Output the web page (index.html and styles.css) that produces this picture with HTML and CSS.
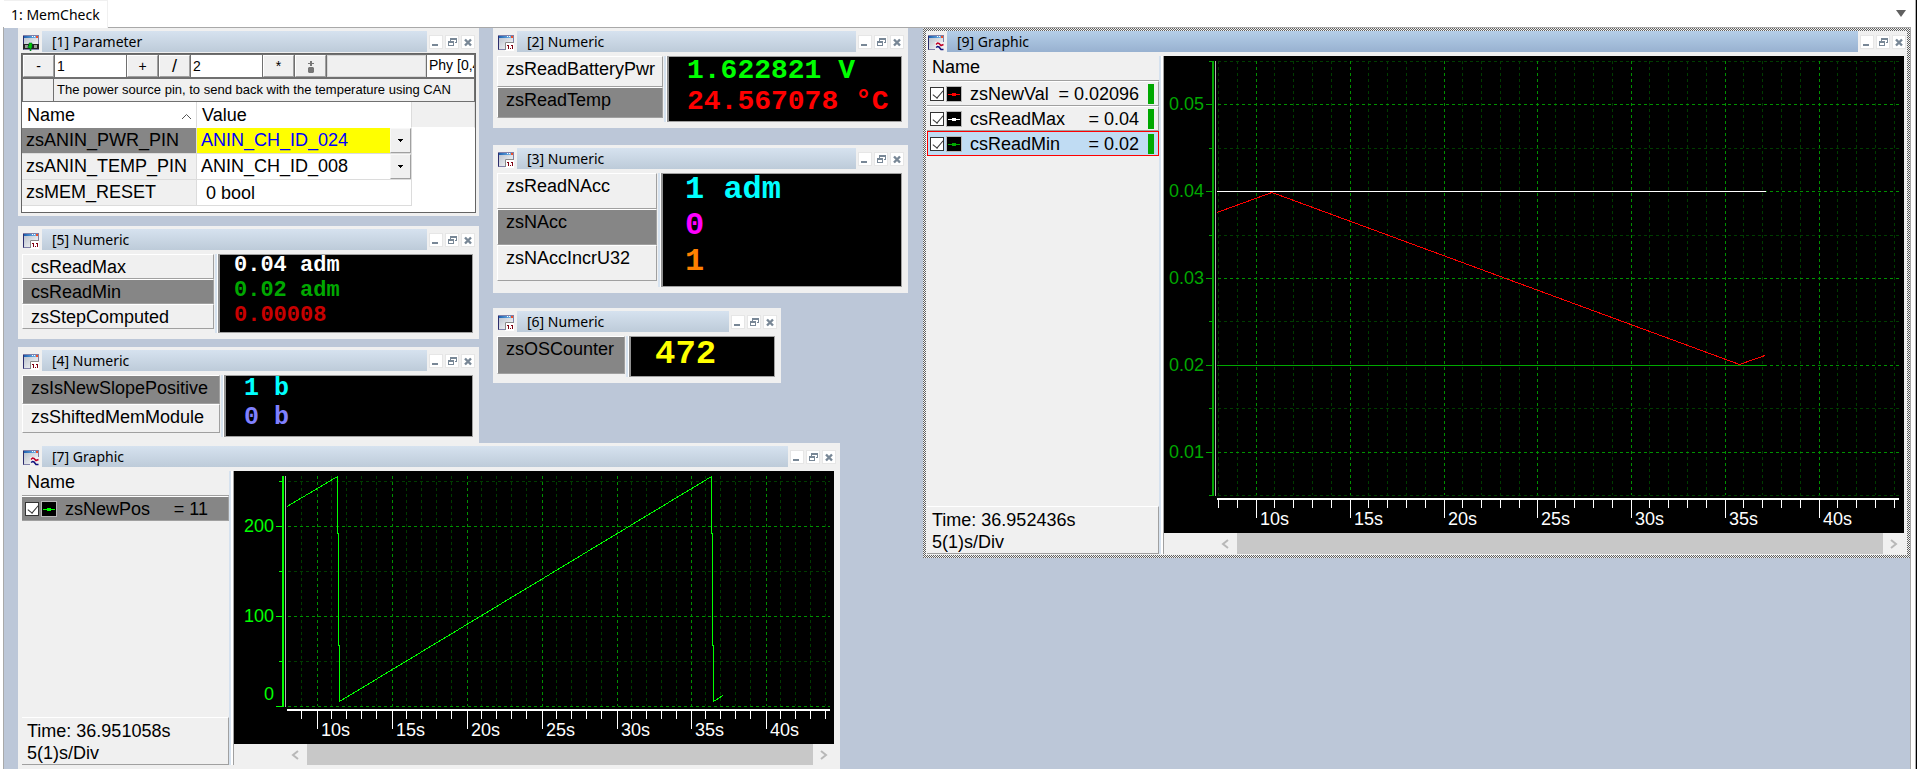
FILE: index.html
```html
<!DOCTYPE html>
<html lang="en">
<head>
<meta charset="utf-8">
<title>MemCheck</title>
<link rel="stylesheet" href="styles.css">
</head>
<body>
<svg class="defs" aria-hidden="true">
  <defs>
    <linearGradient id="pane" x1="0" y1="0" x2="1" y2="1"><stop offset="0" stop-color="#b4bcc8"/><stop offset="1" stop-color="#fff"/></linearGradient>
    <linearGradient id="cap" x1="0" y1="0" x2="1" y2="0"><stop offset="0" stop-color="#1d5fae"/><stop offset="1" stop-color="#7fc4f5"/></linearGradient>
  </defs>
  <symbol id="i-frame" viewBox="0 0 16 16">
    <rect x=".5" y=".5" width="15" height="14" fill="url(#pane)" stroke="#8080a8"/>
    <path d="M.5 1v13.5" stroke="#2c2c6c"/>
    <rect x="1" y="1" width="14" height="2" fill="url(#cap)"/>
    <path d="M9 1h1v1H9zM11 1h1v1h-1z" fill="#fff"/><path d="M13 1h2v2h-2z" fill="#f0512b"/>
  </symbol>
  <symbol id="i-param" viewBox="0 0 16 16">
    <use href="#i-frame" width="16" height="16"/>
    <path d="M0 9h16v5H0z" fill="#222"/><path d="M2 10h3v3H2zM11 10h3v3h-3z" fill="#999"/>
    <path d="M6 8h3v5H8v3H7v-3H5v-2h1z" fill="#0c0" stroke="#063" stroke-width=".6"/>
  </symbol>
  <symbol id="i-num" viewBox="0 0 16 16">
    <use href="#i-frame" width="16" height="16"/>
    <path d="M7 16V7h9v9z" fill="#fff"/><path d="M7.500 15V7.500H16" fill="none" stroke="#888"/>
    <path d="M9 10h2v4H10v-3H9zM13 10h2v4h-1v-3h-1zM12 13h1v1h-1z" fill="#800010"/>
  </symbol>
  <symbol id="i-graph" viewBox="0 0 16 16">
    <use href="#i-frame" width="16" height="16"/>
    <path d="M7 7h9v9H7z" fill="#f0f0f0"/>
    <path d="M8 9.500L9.500 8L11 8.500L13 10.500L15.500 9.500" fill="none" stroke="#c00028" stroke-width="1.500"/>
    <path d="M8 12.500L9.500 11.500L11 12L13 14.500L15.500 14.500" fill="none" stroke="#10107c" stroke-width="1.500"/>
  </symbol>
  <symbol id="i-min" viewBox="0 0 14 14"><path d="M3 9h6v2H3z" fill="#788796"/></symbol>
  <symbol id="i-restore" viewBox="0 0 14 14"><path d="M5 3h7v5h-2V7h1V5H6v1H5z" fill="#788796"/><path d="M3 6h6v5H3zM4 8v2h4V8z" fill="#788796" fill-rule="evenodd"/></symbol>
  <symbol id="i-close" viewBox="0 0 14 14"><path d="M4 4.500l6 6M10 4.500l-6 6" stroke="#788796" stroke-width="2.400"/></symbol>
  <symbol id="i-line" viewBox="0 0 14 14"><path d="M1 7.500h12" stroke="currentColor"/><path d="M5 6h4v3H5z" fill="currentColor"/></symbol>
</svg>

<header class="tabs">
  <button class="tab" type="button">1: MemCheck</button>
  <button class="tab-menu" type="button" aria-label="Tab list"></button>
</header>

<main class="desk">

  <section class="win w1">
    <header class="bar"><svg class="ico"><use href="#i-param"/></svg><h2>[1] Parameter</h2></header>
    <div class="param">
      <div class="tools">
        <button type="button">-</button><input class="step" aria-label="Step" value="1"><button type="button">+</button><button type="button" class="big">/</button><input class="step" aria-label="Factor" value="2"><button type="button">*</button><button type="button" aria-label="Reset"><svg class="knob" viewBox="0 0 8 14"><path d="M3 1h2v2h2v1H5v2H3V4H1V3h2zM2 7h4l1 1v4l-1 1H2l-1-1V8z" fill="#777"/></svg></button><span class="blank"></span><span class="phy">Phy [0,4]</span>
      </div>
      <div class="tools"><span class="pad"></span><span class="hint">The power source pin, to send back with the temperature using CAN</span></div>
      <table>
        <thead><tr><th>Name<svg class="sort" viewBox="0 0 9 5"><path d="M0 5l4.500-4.500L9 5" fill="none" stroke="#555"/></svg></th><th>Value</th><th class="rest"></th></tr></thead>
        <tbody>
          <tr class="sel"><td>zsANIN_PWR_PIN</td><td><div class="pick"><select aria-label="zsANIN_PWR_PIN"><option>ANIN_CH_ID_024</option></select><i></i></div></td><td></td></tr>
          <tr><td>zsANIN_TEMP_PIN</td><td><div class="pick"><select aria-label="zsANIN_TEMP_PIN"><option>ANIN_CH_ID_008</option></select><i></i></div></td><td></td></tr>
          <tr><td>zsMEM_RESET</td><td class="plain">0 bool</td><td></td></tr>
        </tbody>
      </table>
    </div>
  </section>

  <section class="win w5">
    <header class="bar"><svg class="ico"><use href="#i-num"/></svg><h2>[5] Numeric</h2></header>
    <div class="num">
      <ul class="names"><li>csReadMax</li><li class="on">csReadMin</li><li>zsStepComputed</li></ul>
      <ul class="vals"><li class="white">0.04 adm</li><li class="green">0.02 adm</li><li class="brick">0.00008</li></ul>
    </div>
  </section>

  <section class="win w4">
    <header class="bar"><svg class="ico"><use href="#i-num"/></svg><h2>[4] Numeric</h2></header>
    <div class="num">
      <ul class="names"><li class="on">zsIsNewSlopePositive</li><li>zsShiftedMemModule</li></ul>
      <ul class="vals"><li class="cyan">1 b</li><li class="violet">0 b</li></ul>
    </div>
  </section>

  <section class="win w2">
    <header class="bar"><svg class="ico"><use href="#i-num"/></svg><h2>[2] Numeric</h2></header>
    <div class="num">
      <ul class="names"><li>zsReadBatteryPwr</li><li class="on">zsReadTemp</li></ul>
      <ul class="vals"><li class="lime">1.622821 V</li><li class="red">24.567078 °C</li></ul>
    </div>
  </section>

  <section class="win w3">
    <header class="bar"><svg class="ico"><use href="#i-num"/></svg><h2>[3] Numeric</h2></header>
    <div class="num">
      <ul class="names"><li>zsReadNAcc</li><li class="on">zsNAcc</li><li>zsNAccIncrU32</li></ul>
      <ul class="vals"><li class="cyan">1 adm</li><li class="magenta">0</li><li class="orange">1</li></ul>
    </div>
  </section>

  <section class="win w6">
    <header class="bar"><svg class="ico"><use href="#i-num"/></svg><h2>[6] Numeric</h2></header>
    <div class="num">
      <ul class="names"><li class="on">zsOSCounter</li></ul>
      <ul class="vals"><li class="yellow">472</li></ul>
    </div>
  </section>

  <section class="win w7">
    <header class="bar"><svg class="ico"><use href="#i-graph"/></svg><h2>[7] Graphic</h2></header>
    <div class="graphic">
      <div class="side">
        <h3>Name</h3>
        <ul class="signals">
          <li class="on"><label><input type="checkbox" checked><svg class="sw lime" viewBox="0 0 14 14"><use href="#i-line"/></svg>zsNewPos</label><output>= 11</output></li>
        </ul>
        <p class="time">Time: 36.951058s<br>5(1)s/Div</p>
      </div>
      <div class="plot">
        <div class="screen" id="chart7"></div>
        <div class="scroll"><button type="button" aria-label="Left"><svg viewBox="0 0 8 10"><path d="M7 1L2 5l5 4"/></svg></button><span class="thumb"></span><button type="button" aria-label="Right"><svg viewBox="0 0 8 10"><path d="M1 1l5 4-5 4"/></svg></button></div>
      </div>
    </div>
  </section>

  <section class="win active w9">
    <header class="bar"><svg class="ico"><use href="#i-graph"/></svg><h2>[9] Graphic</h2></header>
    <div class="graphic">
      <div class="side">
        <h3>Name</h3>
        <ul class="signals">
          <li><label><input type="checkbox" checked><svg class="sw red" viewBox="0 0 14 14"><use href="#i-line"/></svg>zsNewVal</label><output>= 0.02096</output><b></b></li>
          <li><label><input type="checkbox" checked><svg class="sw white" viewBox="0 0 14 14"><use href="#i-line"/></svg>csReadMax</label><output>= 0.04</output><b></b></li>
          <li class="current"><label><input type="checkbox" checked><svg class="sw green" viewBox="0 0 14 14"><use href="#i-line"/></svg>csReadMin</label><output>= 0.02</output><b></b></li>
        </ul>
        <p class="time">Time: 36.952436s<br>5(1)s/Div</p>
      </div>
      <div class="plot">
        <div class="screen" id="chart9"></div>
        <div class="scroll"><button type="button" aria-label="Left"><svg viewBox="0 0 8 10"><path d="M7 1L2 5l5 4"/></svg></button><span class="thumb"></span><button type="button" aria-label="Right"><svg viewBox="0 0 8 10"><path d="M1 1l5 4-5 4"/></svg></button></div>
      </div>
    </div>
  </section>
</main>

<script src="app.js"></script>
</body>
</html>
```
FILE: styles.css
```css
* { box-sizing: border-box; }
html, body { height: 100%; }
body {
  margin: 0;
  display: flex;
  flex-direction: column;
  overflow: hidden;
  background: #fff;
  border-right: 1px solid #000;
  font: 18px/24px "Liberation Sans", Arial, sans-serif;
  color: #000;
}
ul, h2, h3, p { margin: 0; padding: 0; list-style: none; font-size: 18px; font-weight: normal; }
button, input, select { font: inherit; color: inherit; margin: 0; padding: 0; border: 0; border-radius: 0; }
.defs { position: absolute; width: 0; height: 0; }

.tabs {
  display: flex;
  justify-content: space-between;
  align-items: stretch;
  height: 28px;
  padding: 0 10px 0 4px;
  background: linear-gradient(#a9a9a9, #a9a9a9) 3px 27px / calc(100% - 8px) 1px no-repeat #fff;
}
.tab {
  padding: 0 7px;
  background: #fff;
  border: solid #f0f0f0;
  border-width: 1px 1px 0 0;
  font: 14px/26px "Noto Sans", "Open Sans", sans-serif;
}
.tab-menu {
  width: 10px;
  height: 7px;
  margin-top: 10px;
  background: #606060;
  clip-path: polygon(0 0, 100% 0, 50% 100%);
}

.desk {
  position: relative;
  flex: 1;
  overflow: hidden;
  margin-left: 3px;
  margin-right: 5px;
  border: solid #a9a9a9;
  border-width: 0 1px;
  background: #bcc7d8;
}
body::after {
  content: "";
  position: absolute;
  top: 0;
  right: 1px;
  width: 1px;
  height: 100%;
  background: #b0b0b0;
}

.win {
  position: absolute;
  background: #f0f0f0;
  display: flex;
  flex-direction: column;
}
.w1 { left: 14px; top: 0; width: 461px; height: 188px; }
.w5 { left: 14px; top: 198px; width: 461px; }
.w4 { left: 14px; top: 319px; width: 461px; height: 96px; }
.w2 { left: 489px; top: 0; width: 415px; }
.w3 { left: 489px; top: 117px; width: 415px; }
.w6 { left: 489px; top: 280px; width: 288px; }
.w7 { left: 14px; top: 415px; width: 822px; height: 328px; }
.w9 { left: 919px; right: 0; top: 0; height: 530px; }
.active::after {
  content: "";
  position: absolute;
  inset: 0;
  border: 3px solid transparent;
  background: conic-gradient(#606060 25%, #f4f4f4 0 50%, #606060 0 75%, #f4f4f4 0) 0 0 / 2px 2px border-box;
  mask: linear-gradient(#000 0 0) padding-box, linear-gradient(#000 0 0);
  mask-composite: exclude;
  pointer-events: none;
}

.bar { display: flex; align-items: center; height: 28px; padding: 3px 4px 4px 5px; }
.ico { width: 16px; height: 16px; margin: 2px 3px 0 0; }
.bar h2 {
  flex: 1;
  height: 21px;
  padding-left: 10px;
  margin-right: 2px;
  background: linear-gradient(#d6e2ef, #bdcbd9);
  font: 14px/21px "Noto Sans", "Open Sans", sans-serif;
}
.active .bar h2 { background: linear-gradient(#b4cee8, #98b1d0); }
.ctl { display: flex; gap: 2px; padding-top: 1px; }
.ctl button { display: block; width: 14px; height: 14px; background: #fff; outline: 1px solid #e6e6e6; outline-offset: -1px; }
.ctl svg { display: block; width: 14px; height: 14px; }

/* parameter editor */
.param {
  flex: 1;
  margin: -3px 3px 3px;
  border: 1px solid #646464;
  background: #fff;
  overflow: hidden;
}
.tools { display: flex; gap: 1px; background: #707070; border: 1px solid #707070; font-size: 14px; line-height: 21px; overflow: hidden; }
.tools > * { flex: none; height: 22px; background: #f0f0f0; }
.tools button { width: 31px; border: 1px solid; border-color: #fff #a0a0a0 #a0a0a0 #fff; line-height: 18px; }
.tools .step { width: 71px; padding-left: 2px; background: #fff; }
.tools .big { font-size: 18px; }
.tools .blank { width: 99px; border: 1px solid #d8d8d8; }
.tools .phy { width: 60px; padding-left: 2px; background: #fff; }
.tools .pad { width: 30px; }
.tools .hint { flex: 1; padding-left: 3px; font-size: 13px; white-space: nowrap; }
.knob { width: 8px; height: 14px; vertical-align: middle; }
table { border-collapse: separate; border-spacing: 0; width: 100%; table-layout: fixed; }
th, td { height: 26px; padding: 0; text-align: left; font-weight: normal; line-height: 24px; border: solid #dcdcdc; border-width: 0 1px 1px 0; white-space: nowrap; }
td { line-height: 22px; padding-bottom: 2px; }
th { padding-left: 5px; border-bottom-color: #fff; }
th:nth-child(1) { width: 175px; position: relative; }
th:nth-child(2) { width: 215px; }
th.rest { background: #f0f0f0; }
.sort { position: absolute; right: 5px; top: 12px; width: 9px; height: 5px; }
td:nth-child(1) { padding-left: 4px; background: #f0f0f0; }
td:nth-child(2) { padding-bottom: 0; }
td:nth-child(3) { border: 0; }
.sel td:nth-child(1) { background: #868686; }
.plain { padding-left: 9px; }
.pick { display: flex; height: 25px; }
.pick select { flex: 1; appearance: none; background: #fff; padding: 0 0 2px 4px; }
.sel select { background: #ff0; color: #00f; }
.pick i { width: 21px; border: 1px solid; border-color: #f8f8f8 #a0a0a0 #a0a0a0 #f8f8f8; background: linear-gradient(#000, #000) 7px 10px / 5px 1px no-repeat, linear-gradient(#000, #000) 8px 11px / 3px 1px no-repeat, linear-gradient(#000, #000) 9px 12px / 1px 1px no-repeat, #f0f0f0; }

/* numeric displays */
.num { display: flex; margin: 0 6px 6px 4px; }
.names { flex: none; }
.names li {
  height: var(--row);
  padding-left: 8px;
  line-height: 24px;
  border: 1px solid;
  border-color: #fff #a0a0a0 #a0a0a0 #fff;
}
.on { background: #868686; }
.vals {
  flex: 1;
  margin-left: 4px;
  padding-bottom: var(--tail, 4px);
  border: 1px solid #a0a0a0;
  border-left: 2px solid #909090;
  background: #000;
  box-shadow: -1px 0 #fff, -3px 0 #d6e2ef;
  font: bold var(--size) "Liberation Mono", "Courier New", monospace;
  white-space: pre;
}
.vals li { height: var(--row); line-height: calc(var(--row) - 4px); padding-left: var(--lead); }
.w5 { --row: 25px; --size: 22px; --lead: 14px; --tail: 2px; }
.w4 { --row: 29px; --size: 25px; --lead: 18px; --tail: 2px; }
.w2 { --row: 31px; --size: 28px; --lead: 18px; --tail: 2px; }
.w3 { --row: 36px; --size: 32px; --lead: 22px; --tail: 4px; }
.w6 { --row: 38px; --size: 34px; --lead: 24px; --tail: 1px; }
.w5 .names { width: 192px; }
.w4 .names { width: 198px; }
.w2 .names { width: 166px; }
.w3 .names { width: 160px; }
.w6 .names { width: 128px; }
.white { color: #fff; }
.green { color: #00a800; }
.brick { color: #c80000; }
.cyan { color: #0ff; }
.violet { color: #8080ff; }
.lime { color: #0f0; }
.red { color: #f00; }
.magenta { color: #f0f; }
.orange { color: #ff8000; }
.yellow { color: #ff0; }

/* graphic windows */
.graphic { flex: 1; display: flex; margin: 0 6px 4px 4px; min-height: 0; }
.side { flex: none; width: 232px; display: flex; flex-direction: column; }
.w7 .side { width: 207px; }
.w7 .graphic { margin-bottom: 6px; }
.side h3 { height: 24px; padding-left: 5px; line-height: 22px; }
.signals { flex: 1; border-top: 1px solid #a0a0a0; }
.signals li { display: flex; align-items: center; height: 25px; padding: 0 4px 0 3px; border: solid; border-width: 1px 1px 1px 0; border-color: #fff #a0a0a0 #a0a0a0; line-height: 22px; }
.signals label { flex: 1; display: flex; align-items: center; white-space: nowrap; }
.signals input {
  appearance: none;
  width: 14px;
  height: 14px;
  border: 1px solid #333;
  background: #fff;
}
.signals input:checked::before {
  content: "";
  display: block;
  width: 9px;
  height: 5px;
  margin: 2px 0 0 2px;
  border: solid #333;
  border-width: 0 0 1px 1px;
  transform: rotate(-50deg);
}
.sw { width: 14px; height: 14px; margin: 0 9px 0 3px; background: #000; outline: 1px solid #b8b8b8; }
.signals output { margin-right: 9px; }
.w7 .signals output { margin-right: 16px; }
.signals b { width: 6px; height: 20px; background: #00a800; }
.signals .current { background: #c0dcf3; border: 1px solid #f00; padding: 0 4px 0 2px; }
.time { flex: none; height: 48px; padding: 2px 0 0 5px; border: solid; border-width: 1px 1px 1px 0; border-color: #fff #a0a0a0 #a0a0a0; line-height: 22px; }
.plot { flex: 1; min-width: 0; display: flex; flex-direction: column; margin-left: 5px; box-shadow: -1px 0 #a0a0a0, -3px 0 #fff, -5px 0 #d6e2ef; }
.screen { flex: 1; min-height: 0; overflow: hidden; background: #000; }
.screen svg { display: block; font: 18px "Liberation Sans", Arial, sans-serif; }
.scroll { flex: none; display: flex; height: 21px; padding-left: 52px; }
.scroll button { width: 21px; background: #f0f0f0; display: grid; place-items: center; }
.scroll button:first-child { padding-right: 4px; }
.scroll button svg { width: 8px; height: 10px; fill: none; stroke: #b8b8b8; stroke-width: 2; }
.scroll .thumb { flex: 1; background: #c8c8c8; }
```
FILE: app.js
```js
const SVG = 'http://www.w3.org/2000/svg';

function add(parent, name, attrs, text) {
  const node = document.createElementNS(SVG, name);
  for (const key in attrs) node.setAttribute(key, attrs[key]);
  if (text) node.textContent = text;
  parent.append(node);
  return node;
}

function drawChart(id, c) {
  const svg = document.createElementNS(SVG, 'svg');
  svg.setAttribute('width', c.width);
  svg.setAttribute('height', c.height);
  svg.setAttribute('shape-rendering', 'crispEdges');
  document.getElementById(id).append(svg);

  const minorX = [...c.lead];
  c.majorX.forEach(x => {
    for (let i = 1; i < 5; i++) {
      const m = x + i * c.step - 1;
      if (m < c.right) minorX.push(m);
    }
  });
  const v = xs => xs.map(x => `M${x}.5 ${c.top}V${c.bottom}`).join('');
  const h = ys => ys.map(y => `M${c.left + 1} ${y}.5H${c.right}`).join('');
  add(svg, 'path', { d: v(minorX) + h(c.minorY), stroke: '#003c00', 'stroke-dasharray': '3 3' });
  add(svg, 'path', { d: v(c.majorX) + h(c.majorY.map(m => m[0])), stroke: '#009000', 'stroke-dasharray': '3 3' });

  const ax = c.left - 4;
  add(svg, 'path', { d: `M${ax} ${c.top}V${c.bottom + 1}`, stroke: c.color, 'stroke-width': 2 });
  add(svg, 'path', { d: `M${ax + 2}.5 ${c.top}V${c.bottom + 1}`, stroke: '#b0b0b0' });
  add(svg, 'path', {
    d: c.majorY.map(m => `M${ax - 7} ${m[0]}.5h7`).join('') + c.minorY.map(y => `M${ax - 4} ${y}.5h4`).join(''),
    stroke: c.color
  });
  c.majorY.forEach(([y, label, shift = 6]) =>
    add(svg, 'text', { x: ax - 9, y: y + shift, fill: c.color, 'text-anchor': 'end' }, label));

  const ty = c.bottom + 3;
  add(svg, 'path', { d: `M${c.left} ${ty + 1}H${c.right}`, stroke: '#fff', 'stroke-width': 2 });
  add(svg, 'path', {
    d: minorX.map(x => `M${x}.5 ${ty}v10`).join('') + c.majorX.map(x => `M${x}.5 ${ty}v20`).join(''),
    stroke: '#fff'
  });
  c.majorX.forEach((x, i) =>
    add(svg, 'text', { x: x + 4, y: ty + 27, fill: '#fff' }, `${10 + 5 * i}s`));

  c.signals.forEach(s => add(svg, 'polyline', { points: s.points, fill: 'none', stroke: s.color }));
}

document.querySelectorAll('.bar').forEach(bar => {
  const box = document.createElement('div');
  box.className = 'ctl';
  box.innerHTML = [['min', 'Minimize'], ['restore', 'Restore'], ['close', 'Close']].map(([icon, label]) =>
    `<button type="button" aria-label="${label}"><svg><use href="#i-${icon}"/></svg></button>`).join('');
  bar.append(box);
});

drawChart('chart7', {
  width: 600, height: 273, left: 53, right: 596, top: 5, bottom: 235, step: 15, color: '#00ff00',
  lead: [67], majorX: [83, 158, 233, 308, 383, 457, 532],
  minorY: [10, 100, 190],
  majorY: [[55, '200'], [145, '100'], [235, '0', -6]],
  signals: [{ color: '#00ff00', points: '53,35.5 103.5,5.5 103.5,62 104.5,62 104.5,174 105.5,174 105.5,230.5 477.5,5.5 477.5,62 478.5,62 478.5,174 479.5,174 479.5,230.5 489,224.5' }]
});

drawChart('chart9', {
  width: 740, height: 477, left: 53, right: 735, top: 5, bottom: 439, step: 19, color: '#00a800',
  lead: [54, 73], majorX: [92, 186, 280, 373, 467, 561, 655],
  minorY: [5, 92, 179, 265, 352, 439],
  majorY: [[48, '0.05'], [135, '0.04'], [222, '0.03'], [309, '0.02'], [396, '0.01']],
  signals: [
    { color: '#00a800', points: '53,309.5 602,309.5' },
    { color: '#ff0000', points: '53,156.5 108,136.5 575.5,308.5 601,299.5' },
    { color: '#ffffff', points: '53,135.5 602,135.5' }
  ]
});
```
